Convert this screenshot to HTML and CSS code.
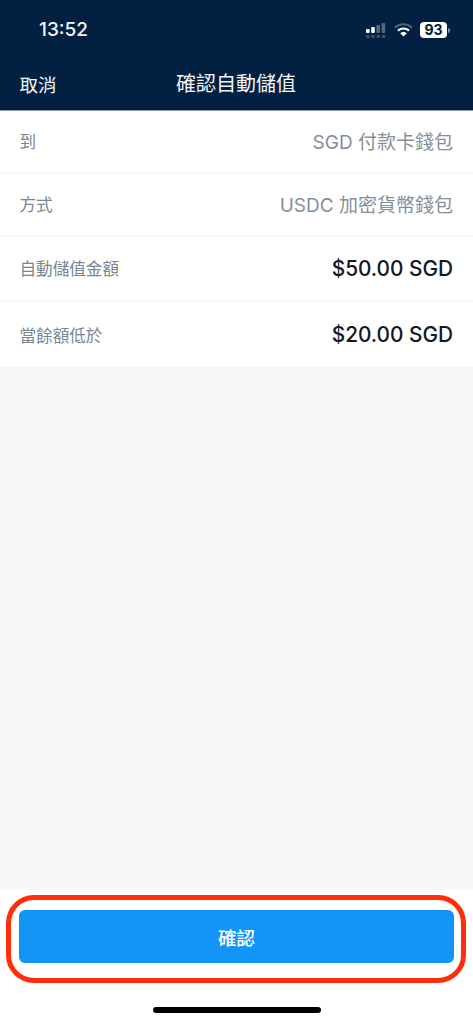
FILE: index.html
```html
<!DOCTYPE html>
<html lang="zh-Hant">
<head>
<meta charset="utf-8">
<title>確認自動儲值</title>
<link rel="stylesheet" href="styles.css">
</head>
<body>
<div class="app">
  <header class="header">
    <div class="status">
      <span class="time">13:52</span>
      <div class="status-icons">
        <svg class="signal" width="21" height="15" viewBox="0 0 21 15">
          <g fill="#fff">
            <rect x="0" y="6" width="3.6" height="4" rx="1"/>
            <rect x="5.2" y="4" width="3.6" height="6" rx="1"/>
          </g>
          <g fill="#fff" opacity="0.32">
            <rect x="10.4" y="2" width="3.6" height="8" rx="1"/>
            <rect x="15.6" y="0" width="3.6" height="10" rx="1"/>
          </g>
          <g fill="#fff" opacity="0.22">
            <rect x="0" y="12" width="3.6" height="3" rx="1"/>
            <rect x="5.2" y="12" width="3.6" height="3" rx="1"/>
            <rect x="10.4" y="12" width="3.6" height="3" rx="1"/>
            <rect x="15.6" y="12" width="3.6" height="3" rx="1"/>
          </g>
        </svg>
        <svg class="wifi" width="19" height="14" viewBox="0 0 19 14">
          <path d="M1 4.6 A12.4 12.4 0 0 1 18 4.6" fill="none" stroke="#fff" stroke-opacity="0.3" stroke-width="2.2"/>
          <path d="M4 7.6 A8.2 8.2 0 0 1 15 7.6" fill="none" stroke="#fff" stroke-width="2.2"/>
          <path d="M9.5 13.6 L6.2 10.2 A4.8 4.8 0 0 1 12.8 10.2 Z" fill="#fff"/>
        </svg>
        <div class="battery">
          <span class="battery-body">93</span>
          <span class="battery-cap"></span>
        </div>
      </div>
    </div>
    <div class="nav">
      <span class="nav-cancel">取消</span>
      <h1 class="nav-title">確認自動儲值</h1>
    </div>
  </header>
  <section class="list">
    <div class="row row-a"><span class="label">到</span><span class="value">SGD 付款卡錢包</span></div>
    <div class="row row-b"><span class="label">方式</span><span class="value">USDC 加密貨幣錢包</span></div>
    <div class="row row-c"><span class="label">自動儲值金額</span><span class="amount">$50.00 SGD</span></div>
    <div class="row row-d"><span class="label">當餘額低於</span><span class="amount">$20.00 SGD</span></div>
  </section>
  <div class="spacer"></div>
  <footer class="footer">
    <div class="button-wrap">
      <button class="confirm">確認</button>
      <div class="highlight"></div>
    </div>
    <div class="home-bar"></div>
  </footer>
</div>
</body>
</html>
```
FILE: styles.css
```css
* { box-sizing: border-box; }
html, body { margin: 0; padding: 0; }
body {
  width: 473px;
  height: 1024px;
  overflow: hidden;
  font-family: Inter, "Noto Sans CJK TC", sans-serif;
  background: #fff;
}
.app { display: flex; flex-direction: column; height: 1024px; }
.header {
  height: 111px;
  flex: none;
  background: #022041;
  border-bottom: 1px solid #8a9bb0;
  color: #fff;
}
.status {
  height: 60px;
  padding: 19px 23px 0 39px;
  display: flex;
  justify-content: space-between;
  align-items: flex-start;
}
.time { font-size: 19px; line-height: 22px; font-weight: 500; color: #f2f4f7; }
.status-icons { display: flex; align-items: center; gap: 7px; margin-top: 3px; }
.battery { display: flex; align-items: center; gap: 1px; margin-left: 0; }
.battery-body {
  width: 27px;
  height: 16px;
  background: #fff;
  border-radius: 4px;
  color: #022041;
  font-size: 14px;
  line-height: 16px;
  font-weight: 700;
  text-align: center;
}
.battery-cap { width: 2px; height: 5px; background: #fff; opacity: 0.5; border-radius: 0 2px 2px 0; }
.nav { position: relative; height: 50px; display: flex; align-items: center; justify-content: center; padding-right: 1px; }
.nav-cancel { position: absolute; left: 19.5px; top: 13px; font-size: 18.5px; line-height: 24px; color: #f5f6f8; }
.nav-title { margin: 0 0 2px; font-size: 20px; line-height: 24px; font-weight: 400; color: #f5f6f8; }
.list { flex: none; background: #fff; }
.row {
  display: flex;
  justify-content: space-between;
  align-items: center;
  padding: 0 20px 2px 19.5px;
  border-bottom: 2px solid #f6f7f9;
}
.row-a { height: 63px; }
.row-b { height: 63px; }
.row-c { height: 65px; padding-bottom: 1px; }
.row-d { height: 65px; padding-bottom: 0; border-bottom: 0; }
.label { font-size: 16.6px; color: #7a8593; }
.value { font-size: 19px; color: #858f9c; }
.amount { font-size: 20.8px; font-weight: 500; color: #14181f; }
.spacer { flex: 1; background: #f6f7f9; }
.footer { flex: none; height: 134px; background: #fff; display: flex; flex-direction: column; align-items: center; }
.button-wrap { position: relative; margin-top: 20px; width: 435px; height: 53px; }
.confirm {
  display: block;
  width: 100%;
  height: 100%;
  border: 0;
  border-radius: 6px;
  background: #1295f6;
  color: #fff;
  font: 500 18.5px Inter, "Noto Sans CJK TC", sans-serif;
}
.highlight {
  position: absolute;
  left: -13px;
  right: -12px;
  top: -15px;
  bottom: -20px;
  border: 5px solid #ff2d0a;
  border-radius: 28px;
}
.home-bar { margin-top: 44px; width: 168px; height: 6px; border-radius: 3px; background: #000; }
```
